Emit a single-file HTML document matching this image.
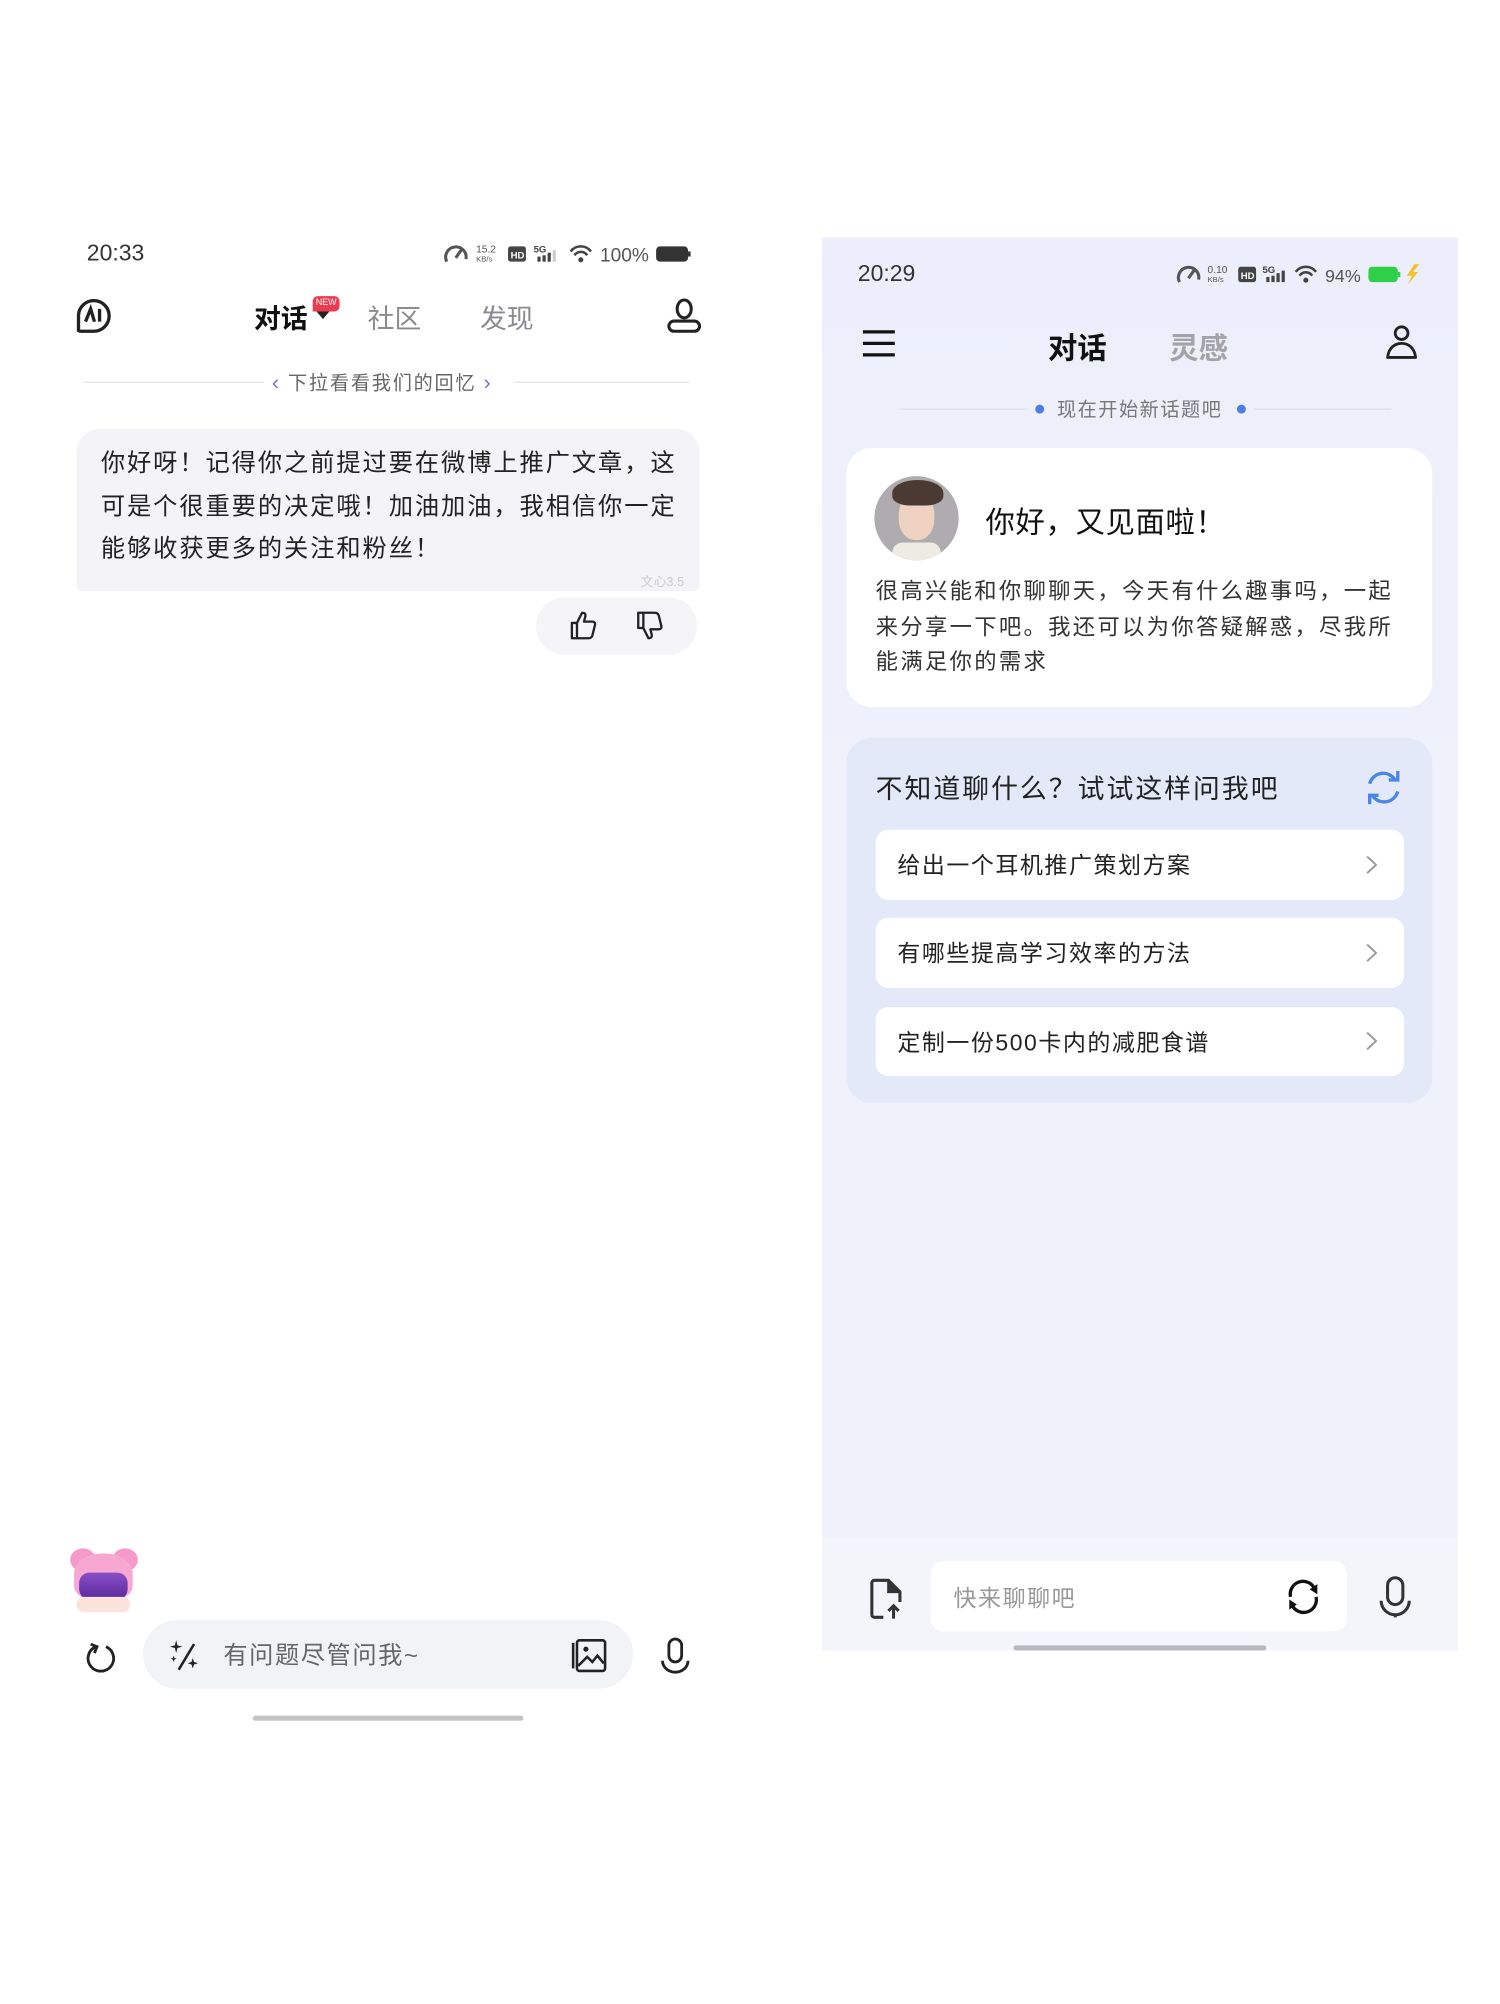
<!DOCTYPE html>
<html><head><meta charset="utf-8">
<style>
*{margin:0;padding:0;box-sizing:border-box}
html,body{width:1500px;height:2000px;background:#fff;overflow:hidden}
#s{position:absolute;left:0;top:0;width:1180px;height:1570px;transform:scale(1.2765);transform-origin:0 0;font-family:"Liberation Sans","Noto Sans CJK SC",sans-serif}
.a{position:absolute;white-space:nowrap}
svg{position:absolute;overflow:visible}
</style></head><body><div id="s">

<!-- LEFT PHONE -->
<div class="a" style="left:68px;top:188px;font-size:18px;color:#333">20:33</div>
<svg style="left:348px;top:189px" width="196" height="20" viewBox="0 0 196 20">
 <path d="M2 16 A8 8 0 1 1 17 14" fill="none" stroke="#555" stroke-width="2.4"/><path d="M9 13 L14 6" stroke="#555" stroke-width="2.4"/>
 <text x="25" y="9" font-size="8" fill="#555" font-family="Liberation Sans">15.2</text><text x="25" y="16" font-size="6" fill="#555" font-family="Liberation Sans">KB/s</text>
 <rect x="50" y="4" width="14" height="12" rx="2" fill="#444"/><text x="52" y="13.5" font-size="7.5" fill="#fff" font-weight="bold" font-family="Liberation Sans">HD</text>
 <text x="70" y="9" font-size="7.5" fill="#444" font-weight="bold" font-family="Liberation Sans">5G</text>
 <rect x="73" y="12" width="2.5" height="4" fill="#444"/><rect x="77" y="11" width="2.5" height="5" fill="#444"/><rect x="81" y="9" width="2.5" height="7" fill="#444"/><rect x="85" y="7" width="2.5" height="9" fill="#ccc"/>
 <path d="M99 8 A10 10 0 0 1 115 8 M102 11 A6 6 0 0 1 112 11" fill="none" stroke="#444" stroke-width="2"/><circle cx="107" cy="14.5" r="2" fill="#444"/>
 <text x="122" y="16" font-size="15" fill="#555" font-family="Liberation Sans">100%</text>
 <rect x="166" y="4" width="25" height="12" rx="3" fill="#333"/><rect x="191" y="8" width="2" height="4" fill="#333"/>
</svg>
<svg style="left:59px;top:233px" width="29" height="29" viewBox="0 0 29 29">
 <path d="M2.5 27 V14 A12 12 0 1 1 14.5 26.5 H4 A1.5 1.5 0 0 1 2.5 25" fill="none" stroke="#222" stroke-width="2.6"/>
 <path d="M8 19 L12 9 L15 19 M19 9 V19" fill="none" stroke="#222" stroke-width="2.6"/>
</svg>
<div class="a" style="left:199px;top:234px;font-size:21px;font-weight:bold;color:#111">对话</div>
<svg style="left:248px;top:244px" width="10" height="7"><path d="M0 0H10L5 6Z" fill="#222"/></svg>
<div class="a" style="left:245px;top:232px;width:21px;height:12px;background:#ee3a4f;border-radius:4px 4px 4px 0;color:#fff;font-size:7px;line-height:12px;text-align:center">NEW</div>
<div class="a" style="left:288px;top:234px;font-size:21px;color:#8a8a8f">社区</div>
<div class="a" style="left:376px;top:234px;font-size:21px;color:#8a8a8f">发现</div>
<svg style="left:522px;top:233px" width="28" height="28" viewBox="0 0 28 28">
 <ellipse cx="14" cy="9" rx="5.5" ry="7" fill="none" stroke="#222" stroke-width="2.4"/>
 <rect x="2" y="18.5" width="24" height="8" rx="4" fill="none" stroke="#222" stroke-width="2.4"/>
</svg>
<div class="a" style="left:65px;top:299px;width:142px;height:1px;background:#e6e6ea"></div>
<div class="a" style="left:402px;top:299px;width:138px;height:1px;background:#e6e6ea"></div>
<div class="a" style="left:213px;top:289px;font-size:15px;color:#666;letter-spacing:1.4px"><span style="color:#7b6fd6;font-size:17px">‹</span> 下拉看看我们的回忆 <span style="color:#7b6fd6;font-size:17px">›</span></div>
<div class="a" style="left:60px;top:336px;width:488px;height:127px;background:#f4f4f8;border-radius:18px 18px 4px 4px"></div>
<div class="a" style="left:79px;top:347px;font-size:19px;color:#222;line-height:33.5px;letter-spacing:1.5px">你好呀！记得你之前提过要在微博上推广文章，这<br>可是个很重要的决定哦！加油加油，我相信你一定<br>能够收获更多的关注和粉丝！</div>
<div class="a" style="left:502px;top:447px;font-size:10px;color:#ccc">文心3.5</div>
<div class="a" style="left:420px;top:468px;width:126px;height:45px;background:#f5f5f8;border-radius:22px"></div>
<svg style="left:445px;top:478px" width="24" height="24" viewBox="0 0 24 24"><path d="M3 10 H7 V22 H3 Z M7 10 L11 2 C13 2 14 3 13.5 5 L12.5 9 H19 C21 9 21.5 10.5 21 12 L19 20 C18.5 21.5 17.5 22 16 22 H7" fill="none" stroke="#222" stroke-width="1.8" stroke-linejoin="round"/></svg>
<svg style="left:497px;top:478px" width="24" height="24" viewBox="0 0 24 24"><path d="M3 2 H7 V14 H3 Z M7 14 L11 22 C13 22 14 21 13.5 19 L12.5 15 H19 C21 15 21.5 13.5 21 12 L19 4 C18.5 2.5 17.5 2 16 2 H7" fill="none" stroke="#222" stroke-width="1.8" stroke-linejoin="round"/></svg>

<!-- girl avatar -->
<div class="a" style="left:55px;top:1213px;width:20px;height:18px;border-radius:50%;background:#f59acb"></div>
<div class="a" style="left:88px;top:1213px;width:20px;height:18px;border-radius:50%;background:#f59acb"></div>
<div class="a" style="left:58px;top:1217px;width:46px;height:36px;border-radius:45% 45% 30% 30%;background:#f7a8d2"></div>
<div class="a" style="left:62px;top:1232px;width:38px;height:21px;border-radius:8px;background:linear-gradient(#8a4ec8,#5a2a9a)"></div>
<div class="a" style="left:60px;top:1251px;width:42px;height:12px;border-radius:6px;background:#fbe3dc"></div>

<svg style="left:66px;top:1285px" width="26" height="28" viewBox="0 0 26 28"><path d="M9 5 A10 10 0 1 0 17 5" fill="none" stroke="#222" stroke-width="2.2"/><path d="M5 3 L10 5 L8 10" fill="none" stroke="#222" stroke-width="2.2"/></svg>
<div class="a" style="left:112px;top:1269px;width:384px;height:54px;background:#f2f3f7;border-radius:27px"></div>
<svg style="left:132px;top:1284px" width="26" height="26" viewBox="0 0 26 26"><path d="M20 4 L8 24" stroke="#222" stroke-width="2"/><path d="M6 1 L7 5 L11 6 L7 7 L6 11 L5 7 L1 6 L5 5Z M19 15 L20 18 L23 19 L20 20 L19 23 L18 20 L15 19 L18 18Z M4 13 L4.7 15 L6.5 15.5 L4.7 16 L4 18 L3.3 16 L1.5 15.5 L3.3 15Z" fill="#222"/></svg>
<div class="a" style="left:175px;top:1282px;font-size:19px;color:#666;letter-spacing:1.2px">有问题尽管问我~</div>
<svg style="left:446px;top:1283px" width="30" height="28" viewBox="0 0 30 28"><rect x="6" y="2" width="22" height="24" rx="2" fill="none" stroke="#222" stroke-width="2"/><path d="M3 4 V24" stroke="#222" stroke-width="2"/><circle cx="13" cy="9" r="2" fill="#222"/><path d="M7 22 L14 15 L18 19 L22 14 L27 20" fill="none" stroke="#222" stroke-width="2"/></svg>
<svg style="left:517px;top:1283px" width="24" height="28" viewBox="0 0 24 28"><rect x="7" y="1" width="10" height="18" rx="5" fill="none" stroke="#222" stroke-width="2.2"/><path d="M2 18 A10 9 0 0 0 22 18" fill="none" stroke="#222" stroke-width="2.2"/></svg>
<div class="a" style="left:198px;top:1344px;width:212px;height:4px;border-radius:2px;background:#c4c4c4"></div>

<!-- RIGHT PHONE -->
<div class="a" style="left:644px;top:186px;width:498px;height:1107px;background:linear-gradient(180deg,#eceffb 0%,#eff1fb 40%,#eff2fb 100%)"></div>
<div class="a" style="left:644px;top:1205px;width:498px;height:88px;background:#f3f5fb"></div>
<div class="a" style="left:672px;top:204px;font-size:18px;color:#333">20:29</div>
<svg style="left:922px;top:205px" width="196" height="20" viewBox="0 0 196 20">
 <path d="M2 16 A8 8 0 1 1 17 14" fill="none" stroke="#555" stroke-width="2.4"/><path d="M9 13 L14 6" stroke="#555" stroke-width="2.4"/>
 <text x="24" y="9" font-size="8" fill="#555" font-family="Liberation Sans">0.10</text><text x="24" y="16" font-size="6" fill="#555" font-family="Liberation Sans">KB/s</text>
 <rect x="48" y="4" width="14" height="12" rx="2" fill="#444"/><text x="50" y="13.5" font-size="7.5" fill="#fff" font-weight="bold" font-family="Liberation Sans">HD</text>
 <text x="67" y="9" font-size="7.5" fill="#444" font-weight="bold" font-family="Liberation Sans">5G</text>
 <rect x="70" y="12" width="2.5" height="4" fill="#444"/><rect x="74" y="11" width="2.5" height="5" fill="#444"/><rect x="78" y="9" width="2.5" height="7" fill="#444"/><rect x="82" y="7" width="2.5" height="9" fill="#444"/>
 <path d="M93 8 A10 10 0 0 1 109 8 M96 11 A6 6 0 0 1 106 11" fill="none" stroke="#444" stroke-width="2"/><circle cx="101" cy="14.5" r="2" fill="#444"/>
 <text x="116" y="16" font-size="14" fill="#555" font-family="Liberation Sans">94%</text>
 <rect x="150" y="4" width="23" height="12" rx="3" fill="#2fcf4a"/><rect x="173" y="8" width="2" height="4" fill="#2fcf4a"/>
 <path d="M186 2 L180 11 H184 L181 18 L189 8 H185 L190 2Z" fill="#f2c230"/>
</svg>
<svg style="left:676px;top:258px" width="25" height="22"><path d="M0 2H25M0 11H25M0 20H25" stroke="#111" stroke-width="2.6"/></svg>
<div class="a" style="left:821px;top:254px;font-size:23px;font-weight:bold;color:#111">对话</div>
<div class="a" style="left:916px;top:254px;font-size:23px;font-weight:bold;color:#a4a4a8">灵感</div>
<svg style="left:1085px;top:254px" width="26" height="28" viewBox="0 0 26 28"><circle cx="13" cy="7" r="5" fill="none" stroke="#222" stroke-width="2.2"/><path d="M2 26 C3 18 8 15 13 15 C18 15 23 18 24 26 Z" fill="none" stroke="#222" stroke-width="2.2" stroke-linejoin="round"/></svg>
<div class="a" style="left:705px;top:320px;width:100px;height:1px;background:#dde0ec"></div>
<div class="a" style="left:982px;top:320px;width:108px;height:1px;background:#dde0ec"></div>
<div class="a" style="left:811px;top:317px;width:7px;height:7px;border-radius:50%;background:#4a7fe8"></div>
<div class="a" style="left:969px;top:317px;width:7px;height:7px;border-radius:50%;background:#4a7fe8"></div>
<div class="a" style="left:828px;top:310px;font-size:15px;color:#777;letter-spacing:1.2px">现在开始新话题吧</div>
<div class="a" style="left:663px;top:351px;width:459px;height:203px;background:#fff;border-radius:20px"></div>
<div class="a" style="left:685px;top:373px;width:66px;height:66px;border-radius:50%;background:#aeacae;overflow:hidden">
 <div style="position:absolute;left:19px;top:14px;width:28px;height:36px;border-radius:45%;background:#f0d2c2"></div>
 <div style="position:absolute;left:14px;top:3px;width:40px;height:20px;border-radius:50% 50% 35% 35%;background:#4a3a33"></div>
 <div style="position:absolute;left:14px;top:52px;width:38px;height:16px;border-radius:8px 8px 0 0;background:#eeebe4"></div>
</div>
<div class="a" style="left:772px;top:390px;font-size:23px;color:#111;letter-spacing:0.5px">你好，又见面啦！</div>
<div class="a" style="left:686px;top:450px;font-size:17.5px;color:#333;line-height:27.5px;letter-spacing:1.8px">很高兴能和你聊聊天，今天有什么趣事吗，一起<br>来分享一下吧。我还可以为你答疑解惑，尽我所<br>能满足你的需求</div>
<div class="a" style="left:663px;top:578px;width:459px;height:286px;background:#e4e9fa;border-radius:20px"></div>
<div class="a" style="left:686px;top:602px;font-size:21px;color:#222;letter-spacing:1.6px">不知道聊什么？试试这样问我吧</div>
<svg style="left:1068px;top:602px" width="32" height="30" viewBox="0 0 32 30"><path d="M5 12 A11 11 0 0 1 25 9 M27 18 A11 11 0 0 1 7 21" fill="none" stroke="#4a86e8" stroke-width="2.6"/><path d="M20 9 H27 V2 M12 21 H5 V28" fill="none" stroke="#4a86e8" stroke-width="2.6"/></svg>
<div class="a" style="left:686px;top:650px;width:414px;height:55px;background:#fff;border-radius:10px"></div>
<div class="a" style="left:686px;top:719px;width:414px;height:55px;background:#fff;border-radius:10px"></div>
<div class="a" style="left:686px;top:789px;width:414px;height:54px;background:#fff;border-radius:10px"></div>
<div class="a" style="left:703px;top:664px;font-size:18px;color:#222;letter-spacing:1.2px">给出一个耳机推广策划方案</div>
<div class="a" style="left:703px;top:733px;font-size:18px;color:#222;letter-spacing:1.2px">有哪些提高学习效率的方法</div>
<div class="a" style="left:703px;top:803px;font-size:18px;color:#222;letter-spacing:1.2px">定制一份500卡内的减肥食谱</div>
<svg style="left:1070px;top:670px" width="9" height="15"><path d="M1 1L8 7.5L1 14" fill="none" stroke="#999" stroke-width="1.5"/></svg>
<svg style="left:1070px;top:739px" width="9" height="15"><path d="M1 1L8 7.5L1 14" fill="none" stroke="#999" stroke-width="1.5"/></svg>
<svg style="left:1070px;top:808px" width="9" height="15"><path d="M1 1L8 7.5L1 14" fill="none" stroke="#999" stroke-width="1.5"/></svg>

<svg style="left:682px;top:1237px" width="26" height="32" viewBox="0 0 26 32"><path d="M10 30 H3 A2 2 0 0 1 1 28 V3 A2 2 0 0 1 3 1 H14 L23 10 V18" fill="none" stroke="#333" stroke-width="2.4" stroke-linejoin="round"/><path d="M14 1 V10 H23" fill="#333" stroke="#333" stroke-width="2"/><path d="M18 31 V21 M14 25 L18 21 L22 25" fill="none" stroke="#333" stroke-width="2.4"/></svg>
<div class="a" style="left:729px;top:1223px;width:326px;height:55px;background:#fff;border-radius:10px"></div>
<div class="a" style="left:747px;top:1238px;font-size:18px;color:#999;letter-spacing:1.2px">快来聊聊吧</div>
<svg style="left:1005px;top:1235px" width="32" height="32" viewBox="0 0 32 32"><path d="M6 16 A10 10 0 0 1 25 10 M26 16 A10 10 0 0 1 7 22" fill="none" stroke="#111" stroke-width="2.6"/><path d="M21 10 L27 6 L27 14Z M11 22 L5 26 L5 18Z" fill="#111"/></svg>
<svg style="left:1080px;top:1234px" width="26" height="34" viewBox="0 0 26 34"><rect x="7" y="2" width="12" height="21" rx="6" fill="none" stroke="#333" stroke-width="2.4"/><path d="M2 20 A11 11 0 0 0 24 20 M13 31 V33" fill="none" stroke="#333" stroke-width="2.4"/></svg>
<div class="a" style="left:794px;top:1289px;width:198px;height:4px;border-radius:2px;background:#b8b9bf"></div>

</div></body></html>
